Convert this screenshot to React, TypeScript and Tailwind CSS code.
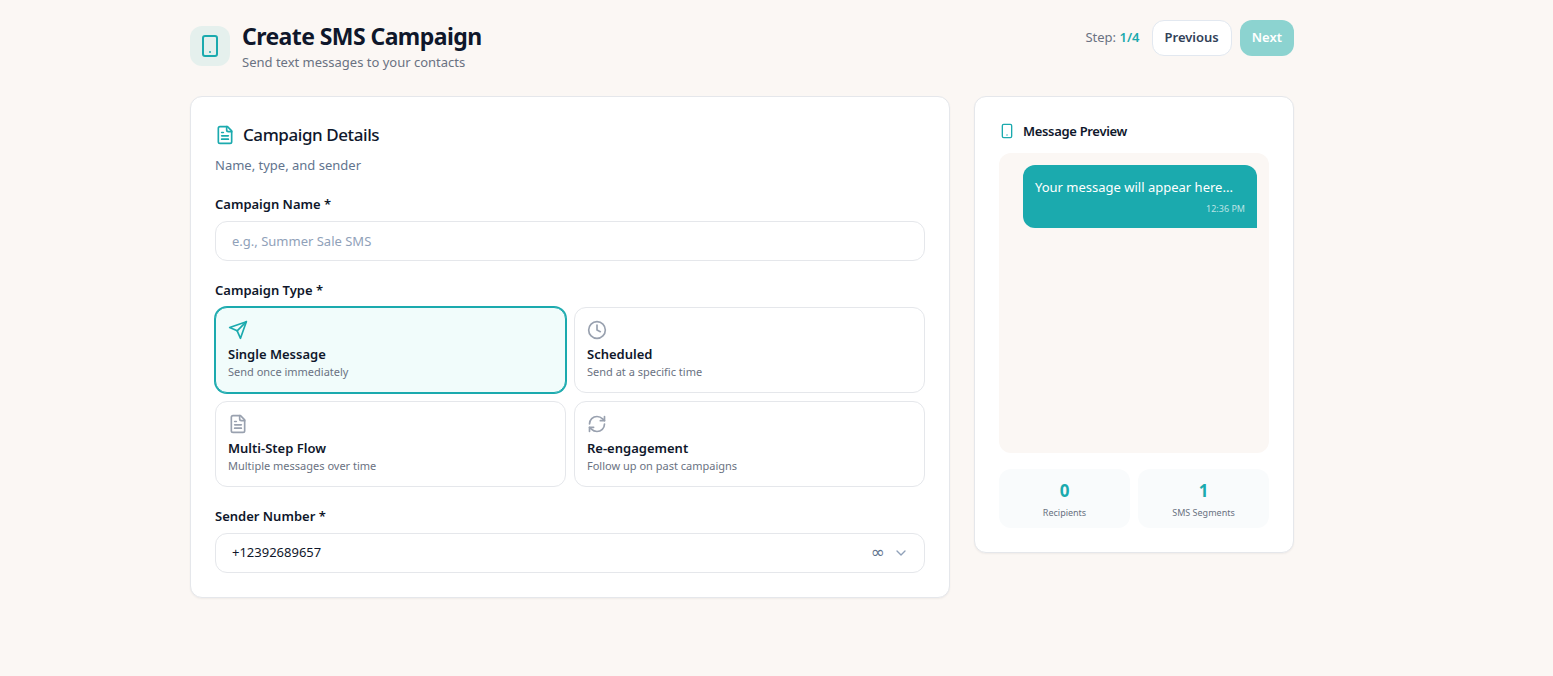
import { useState } from "react";
import { ChevronDown, Clock, RefreshCw, Smartphone } from "lucide-react";

type IconProps = { className?: string };

const FileIcon = ({ className }: IconProps) => (
  <svg
    viewBox="0 0 24 24"
    fill="none"
    stroke="currentColor"
    strokeWidth="2"
    strokeLinecap="round"
    strokeLinejoin="round"
    className={className}
    aria-hidden="true"
  >
    <path d="M15 2H6a2 2 0 0 0-2 2v16a2 2 0 0 0 2 2h12a2 2 0 0 0 2-2V7Z" />
    <path d="M14 2v4a2 2 0 0 0 2 2h4" />
    <path d="M10 9H8" />
    <path d="M16 13H8" />
    <path d="M16 17H8" />
  </svg>
);

const SendIcon = ({ className }: IconProps) => (
  <svg
    viewBox="0 0 24 24"
    fill="none"
    stroke="currentColor"
    strokeWidth="2"
    strokeLinecap="round"
    strokeLinejoin="round"
    className={className}
    aria-hidden="true"
  >
    <path d="m22 2-7 20-4-9-9-4Z" />
    <path d="M22 2 11 13" />
  </svg>
);

const campaignTypes = [
  { id: "single", icon: SendIcon, title: "Single Message", description: "Send once immediately" },
  { id: "scheduled", icon: Clock, title: "Scheduled", description: "Send at a specific time" },
  { id: "flow", icon: FileIcon, title: "Multi-Step Flow", description: "Multiple messages over time" },
  { id: "reengagement", icon: RefreshCw, title: "Re-engagement", description: "Follow up on past campaigns" },
];

const stats = [
  { label: "Recipients", value: 0 },
  { label: "SMS Segments", value: 1 },
];

const Header = () => (
  <header className="flex items-start justify-between mb-6">
    <div className="flex items-center gap-3">
      <div className="flex size-10 items-center justify-center rounded-xl bg-[#e5f0ed]">
        <Smartphone className="size-6 text-[#1baaae]" />
      </div>
      <div>
        <h1 className="text-[23px] leading-8 font-bold tracking-tight">Create SMS Campaign</h1>
        <p className="text-[13px] leading-5 text-gray-500">Send text messages to your contacts</p>
      </div>
    </div>
    <div className="flex items-center gap-2">
      <span className="mr-1 text-[13px] text-gray-500">
        Step: <span className="font-semibold text-[#1baaae]">1/4</span>
      </span>
      <button type="button" className="h-9 rounded-xl border border-slate-200 bg-white px-3 text-[13px] font-semibold text-slate-700">
        Previous
      </button>
      <button type="button" className="h-9 rounded-xl bg-[#8cd3d0] px-3 text-[13px] font-semibold text-white">
        Next
      </button>
    </div>
  </header>
);

const CampaignDetails = () => {
  const [name, setName] = useState("");
  const [type, setType] = useState("single");

  return (
    <section className="rounded-xl border border-gray-200 bg-white p-6 shadow-xs">
      <h2 className="flex items-center gap-2 text-[17px] leading-7 font-medium tracking-tight">
        <FileIcon className="size-5 text-[#1baaae]" />
        Campaign Details
      </h2>
      <p className="mt-1.5 text-[13px] leading-5 text-slate-500">Name, type, and sender</p>

      <div className="mt-5">
        <label htmlFor="campaign-name" className="mb-2 block text-[13px] leading-[18px] font-semibold">
          Campaign Name *
        </label>
        <input
          id="campaign-name"
          type="text"
          value={name}
          onChange={(e) => setName(e.target.value)}
          placeholder="e.g., Summer Sale SMS"
          className="block h-10 w-full rounded-xl border border-gray-200 bg-white px-4 text-[13px] placeholder:text-slate-400"
        />
      </div>

      <div className="mt-5">
        <p id="campaign-type" className="mb-2 text-[13px] leading-[18px] font-semibold">Campaign Type *</p>
        <div role="group" aria-labelledby="campaign-type" className="grid grid-cols-2 gap-2">
          {campaignTypes.map((item) => {
            const Icon = item.icon;
            const selected = item.id === type;
            return (
              <button
                key={item.id}
                type="button"
                aria-pressed={selected}
                onClick={() => setType(item.id)}
                className={`rounded-xl border p-3 text-left ${
                  selected ? "border-[#1baaae] bg-[#f1fcfb] ring-1 ring-[#1baaae]" : "border-gray-200 bg-white"
                }`}
              >
                <Icon className={`mb-1 size-5 ${selected ? "text-[#1baaae]" : "text-gray-400"}`} />
                <span className="block text-[13px] leading-5 font-semibold">{item.title}</span>
                <span className="block text-[11px] leading-4 text-gray-500">{item.description}</span>
              </button>
            );
          })}
        </div>
      </div>

      <div className="mt-5">
        <label htmlFor="sender" className="mb-2 block text-[13px] leading-[18px] font-semibold">
          Sender Number *
        </label>
        <div className="relative">
          <select id="sender" className="block h-10 w-full appearance-none rounded-xl border border-gray-200 bg-white px-4 text-[13px]">
            <option>+12392689657</option>
          </select>
          <div className="pointer-events-none absolute inset-y-0 right-4 flex items-center gap-2 text-slate-500">
            <span className="font-['DejaVu_Sans'] text-[17px]">∞</span>
            <ChevronDown className="size-4 text-slate-400" />
          </div>
        </div>
      </div>
    </section>
  );
};

const MessagePreview = () => (
  <aside className="rounded-xl border border-gray-200 bg-white p-6 shadow-xs">
    <h2 className="flex items-center gap-2 text-[13px] leading-5 font-semibold tracking-tight">
      <Smartphone className="size-4 text-[#1baaae]" />
      Message Preview
    </h2>
    <div className="mt-3 min-h-75 rounded-xl bg-[#fbf7f4] p-3">
      <div className="ml-3 rounded-xl rounded-br-none bg-[#1baaae] p-3 text-white">
        <p className="text-[13px] leading-5">Your message will appear here...</p>
        <p className="mt-1 text-right text-[9px] leading-[15px] text-white/70">12:36 PM</p>
      </div>
    </div>
    <div className="mt-4 grid grid-cols-2 gap-2">
      {stats.map((stat) => (
        <div key={stat.label} className="rounded-xl bg-[#f9fbfc] p-2 text-center">
          <p className="text-[17px] leading-7 font-bold text-[#1baaae]">{stat.value}</p>
          <p className="text-[9px] leading-[15px] text-gray-500">{stat.label}</p>
        </div>
      ))}
    </div>
  </aside>
);

const App = () => (
  <div className="min-h-screen bg-[#fbf7f4] pr-[69px] font-['Noto_Sans','Open_Sans',sans-serif] text-slate-900">
    <main className="mx-auto max-w-6xl px-6 py-5">
      <Header />
      <div className="grid grid-cols-[minmax(0,1fr)_320px] items-start gap-6">
        <CampaignDetails />
        <MessagePreview />
      </div>
    </main>
  </div>
);

export default App;
